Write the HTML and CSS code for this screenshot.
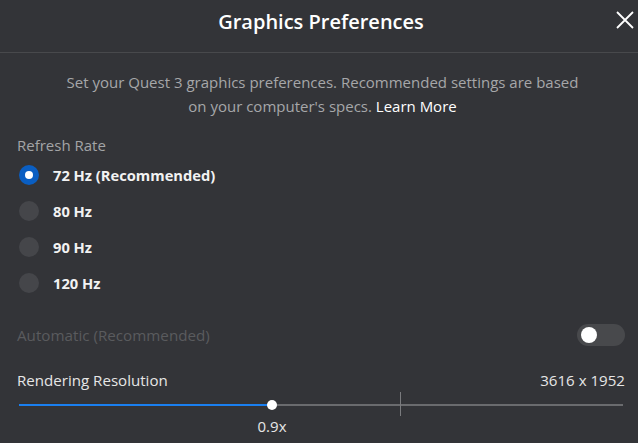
FILE: index.html
```html
<!DOCTYPE html>
<html lang="en">
<head>
<meta charset="utf-8">
<title>Graphics Preferences</title>
<link rel="stylesheet" href="styles.css">
</head>
<body>
<div class="dialog">
  <header class="header">
    <h1 class="title">Graphics Preferences</h1>
    <button class="close" aria-label="Close">
      <svg width="18" height="18" viewBox="0 0 18 18"><path d="M1 1L17 17M17 1L1 17" stroke="#ffffff" stroke-width="1.8" fill="none"/></svg>
    </button>
  </header>
  <div class="body">
    <p class="desc">Set your Quest 3 graphics preferences. Recommended settings are based<br>on your computer's specs. <a class="link" href="#">Learn More</a></p>

    <div class="section-label">Refresh Rate</div>
    <ul class="radios">
      <li class="radio-row"><span class="radio checked"></span><span class="radio-label">72 Hz (Recommended)</span></li>
      <li class="radio-row"><span class="radio"></span><span class="radio-label">80 Hz</span></li>
      <li class="radio-row"><span class="radio"></span><span class="radio-label">90 Hz</span></li>
      <li class="radio-row"><span class="radio"></span><span class="radio-label">120 Hz</span></li>
    </ul>

    <div class="auto-row">
      <span class="auto-label">Automatic (Recommended)</span>
      <span class="toggle"><span class="knob"></span></span>
    </div>

    <div class="res-row">
      <span class="res-label">Rendering Resolution</span>
      <span class="res-value">3616 x 1952</span>
    </div>
    <div class="slider">
      <div class="track"></div>
      <div class="fill" style="width: 253px"></div>
      <div class="tick"></div>
      <div class="thumb" style="left: 253px"></div>
    </div>
    <div class="slider-value" style="margin-left: 255px"><span>0.9x</span></div>
  </div>
</div>
</body>
</html>
```
FILE: styles.css
```css
html, body {
  margin: 0;
  padding: 0;
  background: #333438;
}
body {
  font-family: "Open Sans", "Noto Sans", sans-serif;
  color: #ffffff;
  width: 638px;
  height: 443px;
  overflow: hidden;
}
.dialog {
  display: flex;
  flex-direction: column;
}
.header {
  height: 52px;
  border-bottom: 1px solid #48494c;
  display: flex;
  align-items: center;
  justify-content: center;
  position: relative;
}
.title {
  margin: 0;
  font-size: 20px;
  font-weight: 600;
  color: #ffffff;
  line-height: 26px;
  margin-top: -9px;
  margin-left: 4px;
}
.close {
  position: absolute;
  right: 4px;
  top: 11px;
  width: 18px;
  height: 18px;
  padding: 0;
  border: 0;
  background: none;
  display: block;
}
.close svg { display: block; }
.body {
  padding: 17px 13px 0 17px;
  display: flex;
  flex-direction: column;
}
.desc {
  margin: 0;
  text-align: center;
  font-size: 15px;
  line-height: 24px;
  color: #a6a7a9;
  padding-left: 3px;
}
.link {
  color: #ffffff;
  text-decoration: none;
}
.section-label {
  margin-top: 17px;
  font-size: 15px;
  line-height: 20px;
  color: #a3a4a6;
}
.radios {
  list-style: none;
  margin: 2px 0 0;
  padding: 0;
}
.radio-row {
  height: 36px;
  display: flex;
  align-items: center;
}
.radio {
  width: 20px;
  height: 20px;
  border-radius: 50%;
  background: #45464a;
  margin-left: 2px;
  margin-right: 14px;
  display: flex;
  align-items: center;
  justify-content: center;
}
.radio.checked {
  background: #0a5ec2;
}
.radio.checked::after {
  content: "";
  width: 8px;
  height: 8px;
  border-radius: 50%;
  background: #ffffff;
}
.radio-label {
  font-size: 14.7px;
  font-weight: 700;
  color: #f2f2f2;
}
.auto-row {
  margin-top: 16px;
  height: 36px;
  display: flex;
  align-items: center;
  justify-content: space-between;
}
.auto-label {
  font-size: 15.2px;
  color: #5a5b5e;
}
.toggle {
  width: 48px;
  height: 22px;
  border-radius: 11px;
  background: #48494c;
  display: flex;
  align-items: center;
  padding-left: 4px;
  box-sizing: border-box;
}
.knob {
  width: 16px;
  height: 16px;
  border-radius: 50%;
  background: #ffffff;
}
.res-row {
  margin-top: 17px;
  height: 20px;
  display: flex;
  align-items: center;
  justify-content: space-between;
  font-size: 15.1px;
  color: #e6e6e6;
}
.slider {
  position: relative;
  height: 24px;
  margin-top: 2px;
  margin-left: 2px;
  margin-right: 2px;
}
.track {
  position: absolute;
  left: 0;
  right: 0;
  top: 12px;
  height: 2px;
  background: #6a6b6e;
}
.fill {
  position: absolute;
  left: 0;
  top: 12px;
  height: 2px;
  background: #1a7ff0;
}
.tick {
  position: absolute;
  left: 381px;
  top: 0;
  width: 1px;
  height: 24px;
  background: #7a7b7e;
}
.thumb {
  position: absolute;
  top: 8px;
  width: 10px;
  height: 10px;
  margin-left: -5px;
  border-radius: 50%;
  background: #ffffff;
}
.slider-value {
  width: 0;
  display: flex;
  justify-content: center;
  font-size: 15px;
  line-height: 20px;
  color: #e6e6e6;
}
.slider-value span { white-space: nowrap; }
```
